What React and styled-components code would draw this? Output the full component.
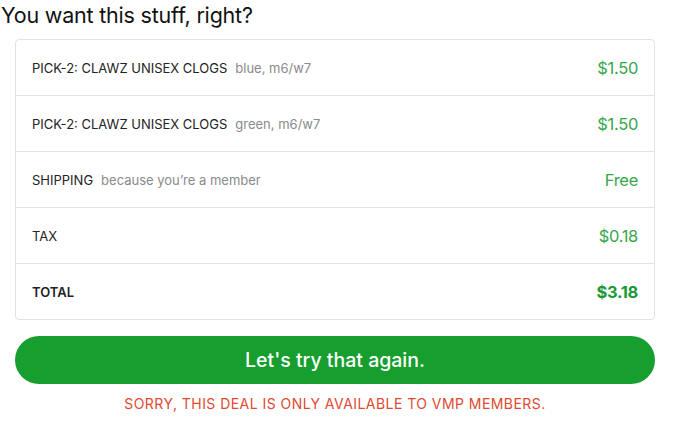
import styled, { createGlobalStyle } from "styled-components";

const GlobalStyle = createGlobalStyle`
  body {
    margin: 0;
    background: #fff;
    font-family: "Inter", "Liberation Sans", sans-serif;
  }
`;

const items = [
  { label: "PICK-2: CLAWZ UNISEX CLOGS", note: "blue, m6/w7", price: "$1.50" },
  { label: "PICK-2: CLAWZ UNISEX CLOGS", note: "green, m6/w7", price: "$1.50" },
  { label: "SHIPPING", note: "because you’re a member", price: "Free" },
  { label: "TAX", price: "$0.18" },
  { label: "TOTAL", price: "$3.18", total: true },
];

export default function App() {
  return (
    <Page>
      <GlobalStyle />
      <Title>You want this stuff, right?</Title>
      <Body>
        <Summary>
          {items.map((item, index) => (
            <Row key={index}>
              <Label $total={item.total}>
                {item.label}
                {item.note && <Note>{item.note}</Note>}
              </Label>
              <Price $total={item.total}>{item.price}</Price>
            </Row>
          ))}
        </Summary>
        <Button>Let's try that again.</Button>
        <Error>SORRY, THIS DEAL IS ONLY AVAILABLE TO VMP MEMBERS.</Error>
      </Body>
    </Page>
  );
}

const Page = styled.div`
  width: 677px;
  height: 426px;
  overflow: hidden;
`;

const Title = styled.h1`
  margin: 0;
  padding: 2px 0 0 1px;
  height: 36px;
  box-sizing: border-box;
  font-size: 21.5px;
  font-weight: 400;
  color: #111;
  letter-spacing: -0.2px;
`;

const Body = styled.div`
  padding: 0 22px 0 15px;
  display: flex;
  flex-direction: column;
`;

const Summary = styled.div`
  margin-top: 3px;
  border: 1px solid #e2e2e2;
  border-radius: 4px;
`;

const Row = styled.div`
  height: 55px;
  display: flex;
  align-items: center;
  justify-content: space-between;
  padding: 0 16px;
  border-top: 1px solid #e2e2e2;

  &:first-child {
    border-top: none;
  }
`;

const Label = styled.span`
  font-size: 13px;
  color: #222;
  font-weight: ${(p) => (p.$total ? 600 : 400)};
`;

const Note = styled.span`
  margin-left: 8px;
  color: #8a8a8a;
`;

const Price = styled.span`
  font-size: 16.5px;
  color: ${(p) => (p.$total ? "#1a9a35" : "#35a848")};
  font-weight: ${(p) => (p.$total ? 700 : 400)};
  letter-spacing: -0.3px;
`;

const Button = styled.button`
  margin-top: 16px;
  height: 48px;
  border: none;
  border-radius: 24px;
  background: #169e2f;
  color: #fff;
  font-family: inherit;
  font-size: 19.5px;
  font-weight: 500;
  cursor: pointer;
`;

const Error = styled.div`
  margin-top: 11px;
  text-align: center;
  font-size: 14px;
  letter-spacing: 0.45px;
  color: #e04a2f;
`;
